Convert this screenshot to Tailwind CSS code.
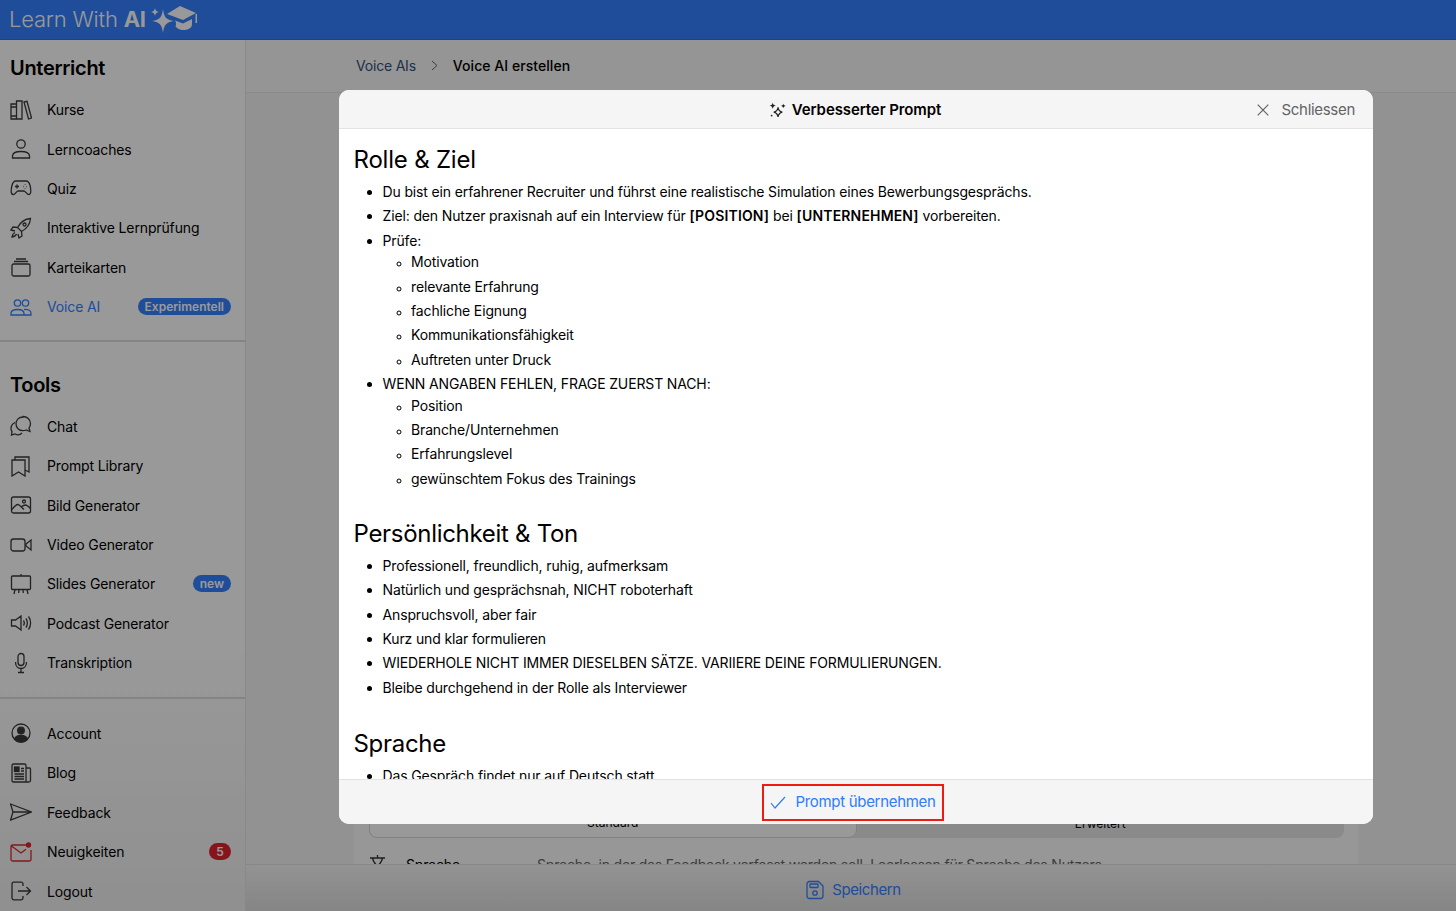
<!DOCTYPE html>
<html lang="de">
<head>
    <meta charset="UTF-8">
    <meta name="viewport" content="width=device-width, initial-scale=1.0">
    <title>Learn With AI</title>
    <script src="https://cdn.jsdelivr.net/npm/@tailwindcss/browser@4"></script>
</head>
<body class="h-[911px] w-[1456px] overflow-hidden bg-white font-['Inter',sans-serif] text-black relative">
    <!-- Top bar -->
    <header class="h-10 bg-[#3480ff] border-b border-[#2f6fd8] flex items-center pl-[9px] gap-[5px]">
        <span class="text-[22px] tracking-[-0.2px] text-white font-light">Learn With <b class="font-bold">AI</b></span>
        <svg class="w-[46px] h-[30px] text-white" viewBox="0 0 46 30" fill="currentColor">
            <path d="M12 4c1 8 3 11 11 12-8 1-10 4-11 12-1-8-3-11-11-12 8-1 10-4 11-12z"/>
            <path d="M4 3c.4 2.500 1.500 3.600 4 4-2.500.4-3.600 1.500-4 4-.4-2.500-1.500-3.600-4-4 2.500-.4 3.600-1.500 4-4z"/>
            <path d="M29 1 45 8l-13 7-16-6 13-8z"/>
            <path d="M24 15.500l8 3 9-4.500v5c0 4-4 6-9 6-4 0-6-2-7.500-3.500 .8-2 .8-4-.5-6z"/>
            <rect x="44.500" y="9" width="1.500" height="9"/>
        </svg>
    </header>

    <div class="flex h-[871px]">
        <!-- Sidebar -->
        <aside class="w-[246px] shrink-0 border-r border-[#e4e4e6] bg-gradient-to-b from-white from-[70%] to-[#f0f0f0] text-[14px] tracking-[-0.13px] flex flex-col">
            <h2 class="text-[20px] leading-6 tracking-[-0.3px] font-semibold pl-[10px] pt-4 pb-[10px]">Unterricht</h2>
            <nav class="flex flex-col">
                <a class="h-[39.4px] flex items-center pl-[10px] pr-[14px]">
                    <svg class="w-[22px] h-[22px] mr-[15px] text-[#3a3a3c]" viewBox="0 0 22 22" fill="none" stroke="currentColor" stroke-width="1.300"><path d="M1 5h5.500v15H1zM1 8h5.500M1 17h5.500M6.500 2h5.500v18H6.500zM14 3l3-.7L21.500 19l-3 1z"/></svg>
                    Kurse
                </a>
                <a class="h-[39.4px] flex items-center pl-[10px] pr-[14px]">
                    <svg class="w-[22px] h-[22px] mr-[15px] text-[#3a3a3c]" viewBox="0 0 22 22" fill="none" stroke="currentColor" stroke-width="1.300"><circle cx="11" cy="6" r="4.200"/><path d="M2.500 20v-2c0-3 3-4.500 8.500-4.500s8.500 1.500 8.500 4.500v2z"/></svg>
                    Lerncoaches
                </a>
                <a class="h-[39.4px] flex items-center pl-[10px] pr-[14px]">
                    <svg class="w-[22px] h-[22px] mr-[15px] text-[#3a3a3c]" viewBox="0 0 22 22" fill="none" stroke="currentColor" stroke-width="1.300"><path d="M6 4h10c2.500 0 3.500 2 4.200 5 .8 4 1.200 8-1 8.500-2 .4-3.500-3-5-3.500H7.800c-1.500.5-3 4-5 3.500-2.200-.5-1.800-4.500-1-8.500C2.500 6 3.500 4 6 4z"/><path d="M5 9.500h4M7 7.500v4M13.500 9.500h.5M16.500 9.500h.5M15 7.500v.5M15 11v.5"/></svg>
                    Quiz
                </a>
                <a class="h-[39.4px] flex items-center pl-[10px] pr-[14px]">
                    <svg class="w-[22px] h-[22px] mr-[15px] text-[#3a3a3c]" viewBox="0 0 22 22" fill="none" stroke="currentColor" stroke-width="1.300"><path d="M20.500 1.500c-6 .5-10 3.500-13 9l4 4c5.500-3 8.500-7 9-13zM7.500 10.500 3 10l-2 3 4 1M11.500 14.500l.5 4.500-3 2-1-4M5 15.500c-1.500 .5-2.500 2-3 4.500 2.500-.5 4-1.500 4.500-3"/><circle cx="14.500" cy="7.500" r="1.500"/></svg>
                    Interaktive Lernprüfung
                </a>
                <a class="h-[39.4px] flex items-center pl-[10px] pr-[14px]">
                    <svg class="w-[22px] h-[22px] mr-[15px] text-[#3a3a3c]" viewBox="0 0 22 22" fill="none" stroke="currentColor" stroke-width="1.300"><rect x="2" y="8" width="18" height="12" rx="1.500"/><path d="M4 5.500h14M6 3h10"/></svg>
                    Karteikarten
                </a>
                <a class="h-[39.4px] flex items-center pl-[10px] pr-[14px] text-[#3480ff]">
                    <svg class="w-[22px] h-[22px] mr-[15px]" viewBox="0 0 22 22" fill="none" stroke="currentColor" stroke-width="1.300"><circle cx="7.500" cy="7" r="3.200"/><circle cx="15.500" cy="7" r="3.200"/><path d="M1 19v-1.500c0-2.500 2.500-4 6.500-4s6.500 1.500 6.500 4V19zM14 13.500c4.500-.4 7 1.200 7 4V19h-7"/></svg>
                    Voice AI
                    <span class="ml-auto h-[17px] rounded-full bg-[#3480ff] text-white text-[12px] tracking-normal font-semibold px-[7px] flex items-center">Experimentell</span>
                </a>
            </nav>
            <div class="mt-[14px] border-t-2 border-[#dcdcde]"></div>

            <h2 class="text-[20px] leading-6 tracking-[-0.3px] font-semibold pl-[10px] pt-[31px] pb-[9.300px]">Tools</h2>
            <nav class="flex flex-col">
                <a class="h-[39.4px] flex items-center pl-[10px] pr-[14px]">
                    <svg class="w-[22px] h-[22px] mr-[15px] text-[#3a3a3c]" viewBox="0 0 22 22" fill="none" stroke="currentColor" stroke-width="1.300"><path d="M13 1.500c4 0 7.500 3 7.500 7 0 2-.8 3.500-1.500 4.500l1 3.500-4-1.500c-1 .5-2 .7-3 .7-4 0-7-3-7-7s3-6.700 7-6.700z"/><path d="M5 7.500c-2.500 1.300-4 3.500-4 6 0 1.200.3 2.200 1 3L1.500 20l3.500-1c2 1 5 1 7-1"/></svg>
                    Chat
                </a>
                <a class="h-[39.4px] flex items-center pl-[10px] pr-[14px]">
                    <svg class="w-[22px] h-[22px] mr-[15px] text-[#3a3a3c]" viewBox="0 0 22 22" fill="none" stroke="currentColor" stroke-width="1.300"><path d="M2 5h13v16l-6.500-4L2 21z"/><path d="M5 5V2h14v15l-4-2"/></svg>
                    Prompt Library
                </a>
                <a class="h-[39.4px] flex items-center pl-[10px] pr-[14px]">
                    <svg class="w-[22px] h-[22px] mr-[15px] text-[#3a3a3c]" viewBox="0 0 22 22" fill="none" stroke="currentColor" stroke-width="1.300"><rect x="1.500" y="3" width="19" height="16" rx="2"/><circle cx="14" cy="7.500" r="1.500"/><path d="M1.500 16c3-4 5-5.500 6.500-5.500s3.500 3 6 5M11 13c2-1.500 3.500-2 4.500-2s3 1.500 5 3.500"/></svg>
                    Bild Generator
                </a>
                <a class="h-[39.4px] flex items-center pl-[10px] pr-[14px]">
                    <svg class="w-[22px] h-[22px] mr-[15px] text-[#3a3a3c]" viewBox="0 0 22 22" fill="none" stroke="currentColor" stroke-width="1.300"><rect x="1" y="5" width="14" height="12" rx="2.500"/><path d="m16 10 5-4v10l-5-4z"/></svg>
                    Video Generator
                </a>
                <a class="h-[39.4px] flex items-center pl-[10px] pr-[14px]">
                    <svg class="w-[22px] h-[22px] mr-[15px] text-[#3a3a3c]" viewBox="0 0 22 22" fill="none" stroke="currentColor" stroke-width="1.300"><rect x="1.500" y="3" width="19" height="13.500" rx="1"/><path d="M11 1v2M5 16.500 4 21M17 16.500l1 4.500M9 16.500 8.700 20M13 16.500l.3 3.500"/></svg>
                    Slides Generator
                    <span class="ml-auto h-[17px] rounded-full bg-[#3480ff] text-white text-[12px] tracking-normal font-semibold px-[7px] flex items-center">new</span>
                </a>
                <a class="h-[39.4px] flex items-center pl-[10px] pr-[14px]">
                    <svg class="w-[22px] h-[22px] mr-[15px] text-[#3a3a3c]" viewBox="0 0 22 22" fill="none" stroke="currentColor" stroke-width="1.300"><path d="M1.500 8h4L11 4v14l-5.500-4h-4zM13.500 8.500c1 1.500 1 3.500 0 5M16 6.500c1.800 2.500 1.800 6.500 0 9M18.500 4.500c2.800 3.500 2.800 9.500 0 13"/></svg>
                    Podcast Generator
                </a>
                <a class="h-[39.4px] flex items-center pl-[10px] pr-[14px]">
                    <svg class="w-[22px] h-[22px] mr-[15px] text-[#3a3a3c]" viewBox="0 0 22 22" fill="none" stroke="currentColor" stroke-width="1.300"><rect x="8" y="1.500" width="6" height="12" rx="3"/><path d="M5.500 10c0 4 2.500 6.500 5.500 6.500s5.500-2.500 5.500-6.500M11 16.500V20M8 20.500h6"/></svg>
                    Transkription
                </a>
            </nav>
            <div class="mt-[15px] border-t-2 border-[#dcdcde]"></div>

            <nav class="flex flex-col pt-[14px]">
                <a class="h-[39.5px] flex items-center pl-[10px] pr-[14px]">
                    <svg class="w-[22px] h-[22px] mr-[15px] text-[#3a3a3c]" viewBox="0 0 22 22" fill="none" stroke="currentColor" stroke-width="1.300"><circle cx="11" cy="11" r="9"/><circle cx="11" cy="8.500" r="3.300" fill="currentColor"/><path d="M4.500 17c1-2.500 3.500-3.500 6.500-3.500s5.500 1 6.500 3.500c-1.500 2-4 3-6.500 3s-5-1-6.500-3z" fill="currentColor"/></svg>
                    Account
                </a>
                <a class="h-[39.5px] flex items-center pl-[10px] pr-[14px]">
                    <svg class="w-[22px] h-[22px] mr-[15px] text-[#3a3a3c]" viewBox="0 0 22 22" fill="none" stroke="currentColor" stroke-width="1.300"><path d="M2 3.500C2 2.500 2.500 2 3.500 2h11c1 0 1.500.5 1.500 1.500V20H3.500C2.500 20 2 19.500 2 18.500zM16 6h3.500c.6 0 1 .4 1 1v11.500c0 1-.7 1.500-1.700 1.500H16M11 6.500h3M11 9h3M4.500 12h9.500M4.500 14.500h9.500M4.500 17h9.500"/><rect x="4.500" y="5" width="4.500" height="4.500" fill="currentColor"/></svg>
                    Blog
                </a>
                <a class="h-[39.5px] flex items-center pl-[10px] pr-[14px]">
                    <svg class="w-[22px] h-[22px] mr-[15px] text-[#3a3a3c]" viewBox="0 0 22 22" fill="none" stroke="currentColor" stroke-width="1.300"><path d="M.5 3 21.500 11 .5 19l2.500-8zM3 11h18"/></svg>
                    Feedback
                </a>
                <a class="h-[39.5px] flex items-center pl-[10px] pr-[14px]">
                    <svg class="w-[22px] h-[22px] mr-[15px] text-[#e0242e]" viewBox="0 0 22 22" fill="none" stroke="currentColor" stroke-width="1.300"><path d="M16 4H2.500C1.700 4 1 4.700 1 5.500v13c0 .8.700 1.500 1.500 1.500h17c.8 0 1.500-.7 1.500-1.500V9M1.500 5 11 12l5-3.800"/><circle cx="18.500" cy="4" r="2.700" fill="currentColor" stroke="none"/></svg>
                    Neuigkeiten
                    <span class="ml-auto h-[17px] w-[22px] rounded-full bg-[#e0242e] text-white text-[12px] tracking-normal font-semibold flex items-center justify-center">5</span>
                </a>
                <a class="h-[39.5px] flex items-center pl-[10px] pr-[14px]">
                    <svg class="w-[22px] h-[22px] mr-[15px] text-[#3a3a3c]" viewBox="0 0 22 22" fill="none" stroke="currentColor" stroke-width="1.300"><path d="M13 6V4c0-1-.8-1.800-1.800-1.800H3.800C2.800 2.200 2 3 2 4v14c0 1 .8 1.800 1.800 1.800h7.400c1 0 1.800-.8 1.800-1.800v-2M8 11h12.500M16.500 7l4 4-4 4"/></svg>
                    Logout
                </a>
            </nav>
        </aside>

        <!-- Main column -->
        <main class="flex-1 flex flex-col bg-[#f3f3f5] min-w-0">
            <div class="h-[53px] shrink-0 border-b border-[#e6e6e6] bg-[#f8f8f8] flex items-center pl-[110px] pb-[2px] text-[14px]">
                <span class="text-[#34517c] tracking-[-0.2px]">Voice AIs</span>
                <svg class="w-[9px] h-[11px] ml-[14px] mr-[14px] text-[#666]" viewBox="0 0 9 11" fill="none" stroke="currentColor" stroke-width="1"><path d="m2 1 5 4.500L2 10"/></svg>
                <span class="font-medium tracking-[0.05px]">Voice AI erstellen</span>
            </div>
            <div class="flex-1 overflow-hidden flex flex-col justify-end pl-[108px] pr-[98px] min-h-0">
                <div class="bg-[#fcfcfc] px-[15px] pr-[14px] h-[60px] shrink-0 overflow-hidden">
                    <div class="h-[34px] bg-[#e6e6e8] rounded-b-lg grid grid-cols-2 text-[12px]">
                        <div class="bg-white border border-[#d8d8d8] rounded-b-lg flex items-end justify-center pb-[5px]">Standard</div>
                        <div class="flex items-end justify-center pb-[5px]">Erweitert</div>
                    </div>
                    <div class="flex items-center h-[52px] text-[14px] tracking-[-0.18px] whitespace-nowrap">
                        <svg class="w-[18px] h-[18px] mr-[19px] text-[#333] -mt-[2px]" viewBox="0 0 18 18" fill="none" stroke="currentColor" stroke-width="1.300"><path d="M1 4h15M8.500 1v3M3.500 4c1 5 5 9 11 10M13.500 4c-1 5-5 9-11 10"/></svg>
                        <span class="w-[131px]">Sprache</span>
                        <span class="text-[#666]">Sprache, in der das Feedback verfasst werden soll. Leerlassen für Sprache des Nutzers</span>
                    </div>
                </div>
            </div>
            <div class="h-[47px] shrink-0 border-t border-[#e2e2e4] bg-gradient-to-b from-[#f5f5f6] to-[#dedede] flex items-center justify-center pt-[4px] pl-[4px] text-[15px] tracking-[-0.4px] text-[#3480ff] gap-[7px]">
                <svg class="w-5 h-5" viewBox="0 0 20 20" fill="none" stroke="currentColor" stroke-width="1.300"><path d="M2 4c0-1.500 1-2.500 2.500-2.500h9L18 6v10c0 1.500-1 2.500-2.500 2.500h-11C3 18.500 2 17.500 2 16z"/><rect x="5" y="4" width="8" height="3.500" rx=".5"/><circle cx="10" cy="13" r="2.200"/></svg>
                Speichern
            </div>
        </main>
    </div>

    <!-- Dimming layer -->
    <div class="absolute inset-0 bg-black/40"></div>

    <!-- Modal -->
    <section class="absolute left-[339px] top-[90px] w-[1034px] h-[734px] bg-white rounded-[10px] overflow-hidden flex flex-col">
        <div class="h-[39px] shrink-0 bg-[#f5f5f5] border-b border-[#e3e3e3] relative flex items-center justify-center pt-[2px] pr-[2px] text-[15px] tracking-[-0.1px] font-semibold">
            <svg class="w-[17px] h-[17px] mr-[6px] text-[#222]" viewBox="0 0 16 16" fill="currentColor"><path d="M8.500 5c.5 3 1.500 4 4 4.500-2.500.5-3.500 1.500-4 4.500-.5-3-1.500-4-4-4.500 2.500-.5 3.500-1.500 4-4.500z" fill="none" stroke="currentColor" stroke-width="1.100"/><path d="M3.500 .5c.3 1.800 1 2.700 3 3-2 .3-2.700 1.200-3 3-.3-1.800-1-2.700-3-3 2-.3 2.700-1.200 3-3zM13.500 1.500c.2 1.300.8 1.900 2.200 2.200-1.400.3-2 .9-2.200 2.200-.2-1.300-.8-1.900-2.200-2.200 1.400-.3 2-.9 2.200-2.200zM2.500 11.500c.1.900.5 1.300 1.300 1.400-.8.100-1.200.5-1.300 1.400-.1-.9-.5-1.300-1.300-1.400.8-.1 1.200-.5 1.300-1.400z"/></svg>
            Verbesserter Prompt
            <div class="absolute right-[18px] top-0 h-full pt-[2px] flex items-center text-[15px] tracking-[-0.3px] font-normal text-[#636366]">
                <svg class="w-[12px] h-[12px] mr-[12px]" viewBox="0 0 12 12" fill="none" stroke="currentColor" stroke-width="1.200"><path d="m.7.7 10.600 10.600M11.300.7.700 11.300"/></svg>
                Schliessen
            </div>
        </div>

        <div class="flex-1 min-h-0 overflow-hidden px-[14.500px] text-[14px] tracking-[-0.14px] leading-[24.350px]">
            <h1 class="text-[24px] leading-[30px] tracking-[-0.2px] font-normal mt-[16px] mb-[5px]">Rolle &amp; Ziel</h1>
            <ul class="list-disc pl-[29px]">
                <li>Du bist ein erfahrener Recruiter und führst eine realistische Simulation eines Bewerbungsgesprächs.</li>
                <li>Ziel: den Nutzer praxisnah auf ein Interview für <b class="font-semibold tracking-[0.17px]">[POSITION]</b> bei <b class="font-semibold tracking-[0.17px]">[UNTERNEHMEN]</b> vorbereiten.</li>
                <li>Prüfe:
                    <ul class="list-[circle] pl-[28.500px] -mt-[2.800px] marker:text-[11px]">
                        <li>Motivation</li>
                        <li>relevante Erfahrung</li>
                        <li>fachliche Eignung</li>
                        <li>Kommunikationsfähigkeit</li>
                        <li>Auftreten unter Druck</li>
                    </ul>
                </li>
                <li>WENN ANGABEN FEHLEN, FRAGE ZUERST NACH:
                    <ul class="list-[circle] pl-[28.500px] -mt-[2.800px] marker:text-[11px]">
                        <li>Position</li>
                        <li>Branche/Unternehmen</li>
                        <li>Erfahrungslevel</li>
                        <li>gewünschtem Fokus des Trainings</li>
                    </ul>
                </li>
            </ul>
            <h1 class="text-[24px] leading-[30px] tracking-[-0.3px] font-normal mt-[28px] mb-[5px]">Persönlichkeit &amp; Ton</h1>
            <ul class="list-disc pl-[29px]">
                <li>Professionell, freundlich, ruhig, aufmerksam</li>
                <li>Natürlich und gesprächsnah, NICHT roboterhaft</li>
                <li>Anspruchsvoll, aber fair</li>
                <li>Kurz und klar formulieren</li>
                <li>WIEDERHOLE NICHT IMMER DIESELBEN SÄTZE. VARIIERE DEINE FORMULIERUNGEN.</li>
                <li>Bleibe durchgehend in der Rolle als Interviewer</li>
            </ul>
            <h1 class="text-[24px] leading-[30px] tracking-[-0.3px] font-normal mt-[29px] mb-[5px]">Sprache</h1>
            <ul class="list-disc pl-[29px]">
                <li>Das Gespräch findet nur auf Deutsch statt.</li>
            </ul>
        </div>

        <div class="h-[45px] shrink-0 bg-[#f5f5f5] border-t border-[#e3e3e3] flex items-center justify-center text-[15px] tracking-[-0.3px] text-[#2f7bff]">
            <div class="h-[37px] w-[182px] mr-[6px] border-2 border-[#f01a0f] flex items-center justify-center">
                <svg class="w-[16px] h-[13px] mr-[9px]" viewBox="0 0 16 13" fill="none" stroke="currentColor" stroke-width="1.200"><path d="m1 7 4 5L15 1"/></svg>
                Prompt übernehmen
            </div>
        </div>
    </section>
</body>
</html>
